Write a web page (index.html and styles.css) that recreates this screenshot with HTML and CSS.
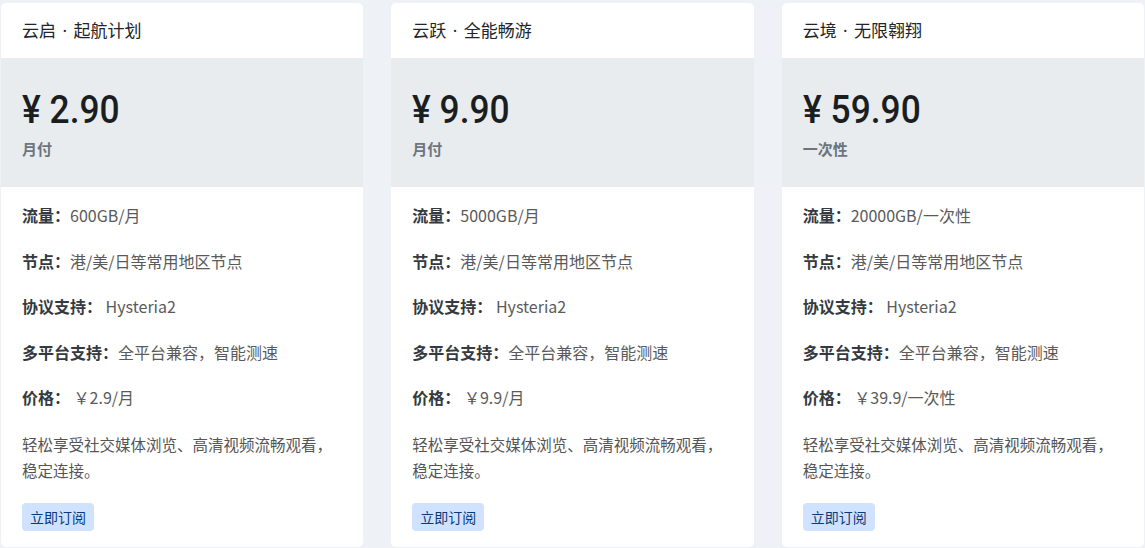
FILE: index.html
```html
<!DOCTYPE html>
<html lang="zh-CN">
<head>
<meta charset="utf-8">
<title>套餐</title>
<link rel="stylesheet" href="styles.css">
</head>
<body>
<div class="plans">
  <div class="card">
    <div class="card-header">云启 · 起航计划</div>
    <div class="card-price">
      <div class="amount">¥ 2.90</div>
      <div class="period">月付</div>
    </div>
    <div class="card-body">
      <p class="row"><span class="label">流量：</span><span class="val">600GB/月</span></p>
      <p class="row"><span class="label">节点：</span><span class="val">港/美/日等常用地区节点</span></p>
      <p class="row"><span class="label">协议支持：</span><span class="val"> Hysteria2</span></p>
      <p class="row"><span class="label">多平台支持：</span><span class="val">全平台兼容，智能测速</span></p>
      <p class="row"><span class="label">价格：</span><span class="val"> ￥2.9/月</span></p>
      <p class="desc">轻松享受社交媒体浏览、高清视频流畅观看，稳定连接。</p>
      <a class="btn">立即订阅</a>
    </div>
  </div>
  <div class="card">
    <div class="card-header">云跃 · 全能畅游</div>
    <div class="card-price">
      <div class="amount">¥ 9.90</div>
      <div class="period">月付</div>
    </div>
    <div class="card-body">
      <p class="row"><span class="label">流量：</span><span class="val">5000GB/月</span></p>
      <p class="row"><span class="label">节点：</span><span class="val">港/美/日等常用地区节点</span></p>
      <p class="row"><span class="label">协议支持：</span><span class="val"> Hysteria2</span></p>
      <p class="row"><span class="label">多平台支持：</span><span class="val">全平台兼容，智能测速</span></p>
      <p class="row"><span class="label">价格：</span><span class="val"> ￥9.9/月</span></p>
      <p class="desc">轻松享受社交媒体浏览、高清视频流畅观看，稳定连接。</p>
      <a class="btn">立即订阅</a>
    </div>
  </div>
  <div class="card">
    <div class="card-header">云境 · 无限翱翔</div>
    <div class="card-price">
      <div class="amount">¥ 59.90</div>
      <div class="period">一次性</div>
    </div>
    <div class="card-body">
      <p class="row"><span class="label">流量：</span><span class="val">20000GB/一次性</span></p>
      <p class="row"><span class="label">节点：</span><span class="val">港/美/日等常用地区节点</span></p>
      <p class="row"><span class="label">协议支持：</span><span class="val"> Hysteria2</span></p>
      <p class="row"><span class="label">多平台支持：</span><span class="val">全平台兼容，智能测速</span></p>
      <p class="row"><span class="label">价格：</span><span class="val"> ￥39.9/一次性</span></p>
      <p class="desc">轻松享受社交媒体浏览、高清视频流畅观看，稳定连接。</p>
      <a class="btn">立即订阅</a>
    </div>
  </div>
</div>
</body>
</html>
```
FILE: styles.css
```css
html, body {
  margin: 0;
  padding: 0;
  background: #eef1f6;
}
body {
  font-family: "Noto Sans CJK SC", "Noto Sans", sans-serif;
  color: #212529;
  overflow: hidden;
}
.plans {
  display: grid;
  grid-template-columns: repeat(3, 1fr);
  gap: 28px;
  padding: 3px 1px 0 1px;
}
.card {
  background: #fff;
  border-radius: 5px;
  overflow: hidden;
}
.card-header {
  padding: 16px 21px;
  font-family: "Noto Sans", "Noto Sans CJK SC", sans-serif;
  font-size: 17px;
  line-height: 23px;
  word-spacing: 2px;
  color: #212529;
}
.card-price {
  background: #e9ecef;
  padding: 30px 21px 27px;
}
.amount {
  font-family: Roboto, "Noto Sans", sans-serif;
  font-size: 38px;
  font-weight: 500;
  line-height: 44px;
  color: #1b1e21;
  display: inline-block;
  transform: scaleX(0.93);
  transform-origin: left center;
}
.period {
  margin-top: 6px;
  font-size: 15px;
  font-weight: 700;
  line-height: 22px;
  color: #6c757d;
}
.card-body {
  padding: 16px 21px 16px;
}
.row {
  margin: 0 0 20px;
  font-size: 16px;
  line-height: 25.5px;
}
.label {
  font-weight: 700;
  color: #343a40;
}
.val {
  color: #5a5a5a;
  white-space: pre;
}
.desc {
  margin: 0 0 20px;
  font-size: 15.5px;
  line-height: 26px;
  color: #555;
}
.btn {
  display: inline-block;
  background: #cfe2ff;
  color: #0a3a7a;
  font-size: 14px;
  line-height: 20px;
  padding: 4px 8px;
  border-radius: 4px;
}
```
